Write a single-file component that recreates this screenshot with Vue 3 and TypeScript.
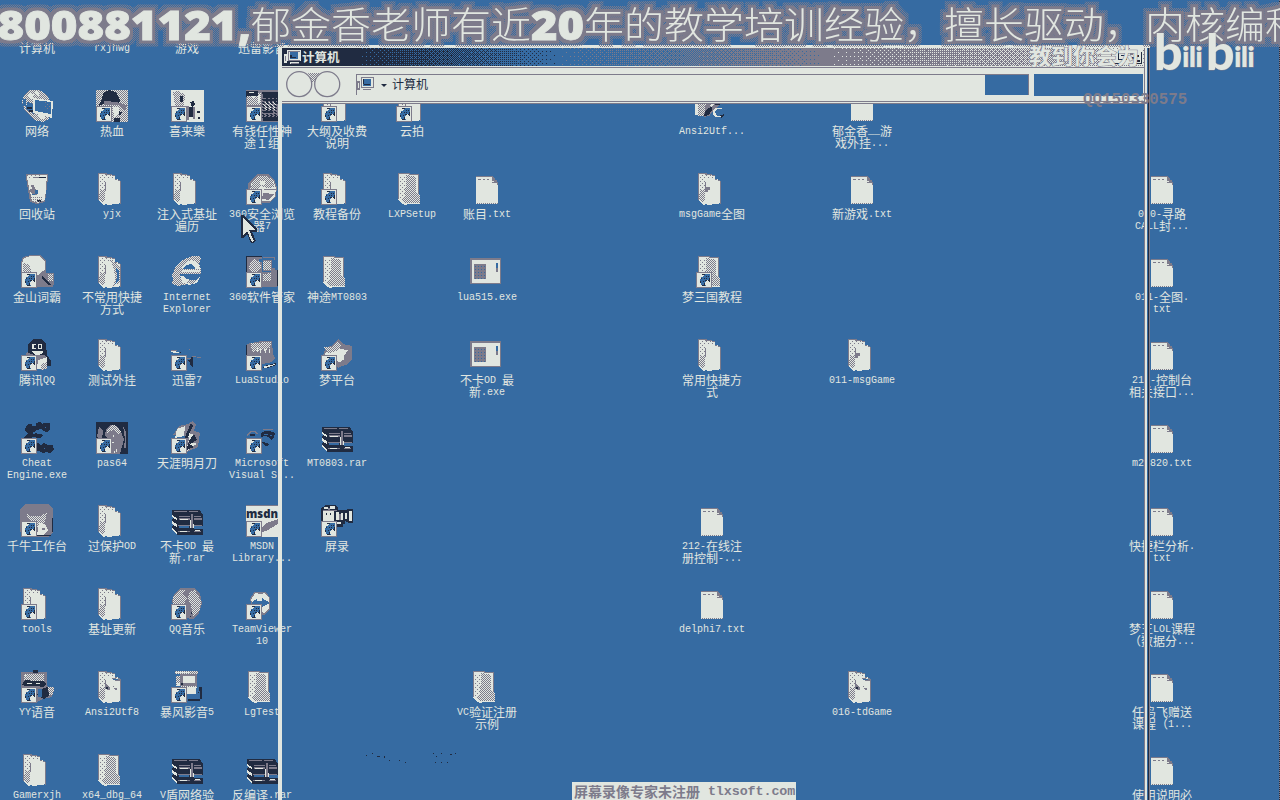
<script setup lang="ts">
interface Item {
  col: number
  row: number
  icon: string
  lines: string[]
  shortcut?: boolean
}

const raw: [number, number, string, string, boolean?][] = [
  [0, 0, 'none', '计算机'],
  [1, 0, 'none', 'rxjhwg'],
  [2, 0, 'none', '游戏'],
  [3, 0, 'none', '迅雷影音'],
  [0, 1, 'network', '网络'],
  [1, 1, 'pirate', '热血', true],
  [2, 1, 'joy', '喜来樂', true],
  [3, 1, 'noise', '有钱任性神|途１组', true],
  [4, 1, 'folder', '大纲及收费|说明', true],
  [5, 1, 'folder', '云拍', true],
  [9, 1, 'bird', 'Ansi2Utf...'],
  [11, 1, 'text', '郁金香__游|戏外挂...'],
  [0, 2, 'bin', '回收站'],
  [1, 2, 'folder', 'yjx'],
  [2, 2, 'folder', '注入式基址|遍历'],
  [3, 2, 'browser', '360安全浏览|器7', true],
  [4, 2, 'folder', '教程备份', true],
  [5, 2, 'files', 'LXPSetup'],
  [6, 2, 'text', '账目.txt'],
  [9, 2, 'folderDot', 'msgGame全图'],
  [11, 2, 'text', '新游戏.txt'],
  [15, 2, 'text', '010-寻路|CALL封...'],
  [0, 3, 'dictionary', '金山词霸', true],
  [1, 3, 'folderArc', '不常用快捷|方式'],
  [2, 3, 'explorer', 'Internet|Explorer'],
  [3, 3, 'manager', '360软件管家', true],
  [4, 3, 'files', '神途MT0803'],
  [6, 3, 'program', 'lua515.exe'],
  [9, 3, 'files', '梦三国教程', true],
  [15, 3, 'text', '011-全图.|txt'],
  [0, 4, 'penguin', '腾讯QQ', true],
  [1, 4, 'folder', '测试外挂'],
  [2, 4, 'thunder', '迅雷7', true],
  [3, 4, 'lua', 'LuaStudio', true],
  [4, 4, 'dream', '梦平台', true],
  [6, 4, 'program', '不卡OD 最|新.exe'],
  [9, 4, 'folder', '常用快捷方|式'],
  [11, 4, 'folderDot', '011-msgGame'],
  [15, 4, 'text', '210-控制台|相关接口...'],
  [0, 5, 'cheat', 'Cheat|Engine.exe', true],
  [1, 5, 'portrait', 'pas64', true],
  [2, 5, 'blade', '天涯明月刀', true],
  [3, 5, 'studio', 'Microsoft|Visual S...', true],
  [4, 5, 'archive', 'MT0803.rar'],
  [15, 5, 'text', 'm20820.txt'],
  [0, 6, 'bull', '千牛工作台', true],
  [1, 6, 'folder', '过保护OD'],
  [2, 6, 'archive', '不卡OD 最|新.rar'],
  [3, 6, 'msdn', 'MSDN|Library...', true],
  [4, 6, 'camera', '屏录', true],
  [9, 6, 'text', '212-在线注|册控制-...'],
  [15, 6, 'text', '快捷栏分析.|txt'],
  [0, 7, 'folder', 'tools', true],
  [1, 7, 'folder', '基址更新'],
  [2, 7, 'music', 'QQ音乐', true],
  [3, 7, 'viewer', 'TeamViewer|10', true],
  [9, 7, 'text', 'delphi7.txt'],
  [15, 7, 'text', '梦王LOL课程|（数据分...'],
  [0, 8, 'raccoon', 'YY语音', true],
  [1, 8, 'folderMark', 'Ansi2Utf8'],
  [2, 8, 'storm', '暴风影音5', true],
  [3, 8, 'files', 'LgTest'],
  [6, 8, 'files', 'VC验证注册|示例'],
  [11, 8, 'folderMark', '016-tdGame'],
  [15, 8, 'text', '任鸟飞赠送|课程（1...'],
  [0, 9, 'folder', 'Gamerxjh'],
  [1, 9, 'files', 'x64_dbg_64'],
  [2, 9, 'archive', 'V盾网络验'],
  [3, 9, 'archive', '反编译.rar'],
  [15, 9, 'text', '使用说明必'],
]

const items: Item[] = raw.map(([col, row, icon, label, shortcut]) => ({
  col,
  row,
  icon,
  lines: label.split('|'),
  shortcut,
}))

// Splits a line into half-width and full-width runs, which use different font sizes.
function runs(line: string): { text: string; latin: boolean }[] {
  return (line.match(/[\x20-\x7e]+|[^\x20-\x7e]+/g) ?? []).map((text) => ({
    text,
    latin: text.charCodeAt(0) < 0x7f,
  }))
}

const D = '#202b41'
const B = '#366ba2'
const G = '#7d7b8b'
const L = '#e1e6e0'

// Each icon is a list of [fill, path] layers on a 32x32 grid.
const folderBody = 'M2 0h4l13 2v4l5 1v23l-3 1h-4l-2 1h-3l-2-1-2 1-3-2-3-3z'
const folderShade: [string, string][] = [
  [G, 'M2 0h6l11 2v4l6 2v23h-1V8l-5-1V3L6 1H3v27l-1-1z'],
  ['url(#sparse)', 'M4 2h14v3H4zM4 4h6v14H4z'],
  ['url(#half)', 'M4 17l5-1v10l-3 4-3-4z'],
  [G, 'M9 9h1v9h-1z'],
]
const filesBody = 'M2 0h3l17 1v20l2 2v8H12l-3 1-3-1-4-4z'
const art: Record<string, [string, string][]> = {
  none: [],
  folder: [[L, folderBody], ...folderShade],
  folderDot: [[L, folderBody], ...folderShade, [G, 'M9 14h5v3h-2v2H9z']],
  folderMark: [
    [L, folderBody],
    ...folderShade,
    [G, 'M9 12l5 5v2h-3zM15 7l9 1v2h-4zM18 17h3v2h-2zM17 15h1v1h-1z'],
    [D, 'M10 16h2v2h-2z'],
    [B, 'M17 8h5v1h-5z'],
  ],
  folderArc: [
    [L, folderBody],
    ...folderShade,
    ['url(#half)', 'M14 4l6 3 4 5v14l-7 5 2-8-1-10z'],
    [B, 'M20 11l3 4v9l-4 5 2-8z'],
  ],
  files: [
    [L, filesBody],
    [G, 'M2 0h3l17 1v1L3 1v26l-1-1zM22 1h1v20h-1z'],
    ['url(#sparse)', 'M4 3h6v22H4z'],
    ['url(#half)', 'M10 2l10 2v24H9z'],
    ['url(#half)', 'M20 20l4 3v7H9l-4-4z'],
  ],
  text: [
    [L, 'M5 4h17l5 6v21H5z'],
    [G, 'M5 3h17v1H5zM7 6h3v1H7zM12 6h2v1h-2zM16 6h2v1h-2zM21 4h2v1h1v2h2v2h1v3h-1v-2h-5V9h2V8h-2z'],
    ['url(#gdots)', 'M5 30h22v1H5zM27 12h1v18h-1z'],
  ],
  program: [
    [G, 'M-1 2h31v26H-1z'],
    [L, 'M1 4h28v23H1z'],
    ['url(#gdots)', 'M2 3h27v1H2z'],
    ['url(#halfblue)', 'M3 8h12v15H3z'],
    [B, 'M25 7h2v5h-2z'],
    [G, 'M25 12h2v4h-2z'],
  ],
  network: [
    ['url(#half)', 'M8 0h10l7 4 5 8-2 17-6 3-9-2-9-9-3-9 2-7z'],
    [L, 'M8 3l6 1-3 5-4-2zM15 1l4 2-2 4-3-3zM16 25h8v4h-5z'],
    [B, 'M6 12l6 2 1 10-8-5zM2 9h3v7H2z'],
    [D, 'M6 17h5v2H6zM8 20h4v2H8z'],
    [L, 'M12 8l20 3-1 17-19-5z'],
    [B, 'M14 10l16 2v12l-16-3z'],
    ['url(#sparse)', 'M23 12l7 1-1 7-5-2z'],
  ],
  pirate: [
    [L, 'M0 0h32v32H0z'],
    ['url(#half)', 'M0 0h32v32H0z'],
    [D, 'M7 3l6-3 7 2 4 8-1 4H7l-5 3 4-8zM22 21l4 1-1 3-4-1zM18 28h6v4h-6z'],
    [G, 'M8 11l14 1v3H8zM20 12l11 3-2 5-5-3z'],
    [L, 'M17 17h6v7l-5 4z'],
  ],
  joy: [
    [L, 'M0 0h33v32H0z'],
    ['url(#half)', 'M2 2l6-1 6 4-1 11H4zM8 3h5v9H8z'],
    [D, 'M9 6h3v6H9zM19 12l4-1 1 4-3 2zM17 17h5v10h-5zM26 21h3v2h-3zM27 27h2v2h-2z'],
    [G, 'M15 16h3v14h-3zM22 17h2v12h-2z'],
  ],
  noise: [
    [G, 'M0 0h32v32H0z'],
    [D, 'M0 1h12v8H6v4H1zM16 2h16v12h-5v9h-9V10zM17 26h15v5H17z'],
    ['url(#half)', 'M1 6h12v9H1zM12 3h3v12h-3zM17 12h13v8H17z'],
    [L, 'M3 2h5v1H3zM6 6h3v2H6zM12 5h2v8h-2z'],
    ['url(#darkhalf)', 'M15 8h16v20H15z'],
  ],
  bird: [
    [L, 'M-1 12l8-1v14H-1z'],
    ['url(#half)', 'M2 10h12v16H2z'],
    [G, 'M10 12h8l6 2-4 4-6 7-6 2z'],
    [D, 'M10 20l6-4v4l-3 5-5 1zM19 13l5 1v1h-5zM23 26l5-2v1l-3 3z'],
    [L, 'M19 18h7v1h-5l-2 3 2 4h4v1h-5l-3-2v-5zM14 15l4-2v1l-3 3z'],
  ],
  bin: [
    [G, 'M5 1h22v4l-3 24-8 2-7-2L5 5z'],
    [L, 'M6 2h20l-2 25-7 3-6-2L6 5z'],
    ['url(#sparse)', 'M6 2h14v3H6z'],
    [D, 'M18 4h7v1h-7zM16 27h4v2h-4z'],
    [G, 'M10 12h3l1 4 2 1v5h-4l-3-4v-2h2zM12 4h6v1h-6z'],
    [B, 'M14 17h3v4h-3zM11 21h3v1h-3z'],
    ['url(#gdots)', 'M10 24h11v5H10z'],
  ],
  browser: [
    [G, 'M11 1h11l6 5 3 8-1 9-6 7H9L2 21V11z'],
    [L, 'M12 3h9l6 4 3 8-1 8-5 5H10l-6-8 1-9z'],
    ['url(#half)', 'M6 9l6-6h9l6 5 2 6-8 1-5-2-5 3-6 1z'],
    [L, 'M14 8h5v4h-5z'],
    [G, 'M18 16h12v1H18zM17 20l11 1-5 6-7-1z'],
  ],
  dictionary: [
    [G, 'M2 1l8-2h9l6 5v13h8v12H0V6z'],
    [L, 'M3 2l7-2h8l6 5v9l-5 3-4 5H1V7z'],
    ['url(#half)', 'M2 7l6 2 3 7H2z'],
    [G, 'M16 19l16-1v13H16z'],
    [D, 'M21 20l10 9h-3l-7-6z'],
    ['url(#half)', 'M27 18h5v7h-5z'],
  ],
  explorer: [
    ['url(#half)', 'M2 22l-1 6 7 2 9-2-5-2-3-5v-3h21v-5l-2-5 2-5-1-3h-8l-9 4-7 6-4 9z'],
    [L, 'M9 11l4-5 8-2 6 3 2 6h-6l-3-4h-5l-3 5zM9 20h5l4 4h7l4-3-3 6-8 2-6-2z'],
    [B, 'M12 13l3-4 5-1 4 3v2zM12 18h15l-1 3-7 3-5-2z'],
    ['url(#half)', 'M6 10l7-6 8-1-8 5-5 8-1 8-4 3zM18 24h8l-5 4-6-1z'],
    [L, 'M11 14h18v2H11z'],
  ],
  manager: [
    [D, 'M0 0h16v32H0zM31 14h1v16h-1z'],
    [G, 'M1 1h15v15H1zM17 1h12v14H17zM16 16h14v15H16z'],
    ['url(#half)', 'M4 6l5-3 5 3 1 6-4 4H6l-3-4z'],
    ['url(#half)', 'M17 5h8v9h-8zM17 18l8-1v8h-8z'],
    [B, 'M13 3h3v3h-3zM16 2h12v2H16zM26 4h3v8h-3z'],
    [G, 'M25 14h6v17h-6z'],
  ],
  penguin: [
    [D, 'M12 0h8l5 5 1 11 4 6v5h-4v-4l-4 5-13-1-4-7 2-6V5z'],
    [G, 'M6 13l7 3h11l2 5-4 4H6l-3-5z'],
    [L, 'M11 5h4v5h-4zM17 5h4v5h-4zM11 12h11v2l-4 2h-4zM17 21l9-3v8l-4 4h-6z'],
    [D, 'M13 6h2v3h-2zM18 6h2v3h-2z'],
    ['url(#half)', 'M20 25l6-2v7l-6 1z'],
  ],
  thunder: [
    [L, 'M0 12h5v1h3v1H2v-1H0z'],
    [D, 'M16 22l4-2 1-4 1 3v10l-3-3v-3zM9 13h1v1H9z'],
    [G, 'M15 19h5v1h-5zM21 17h4v1h-4zM26 18h4v1h-4zM0 11h6v1H0zM18 10h1v1h-1z'],
  ],
  lua: [
    [G, 'M1 5l14-3h11l1 13 2 4-3 4-10 2V16H1z'],
    ['url(#half)', 'M5 4l20-1-1 6-18 4z'],
    [L, 'M11 9h1v4h-1zM14 10h1v4h-1zM18 10h3v1h-1v3h-1zM22 10h2v4h-1v-3z'],
    [D, 'M0 6h1v10H0zM18 27l12-3v2l-8 3h-5z'],
    [L, 'M16 28l13-3v1l-10 3z'],
  ],
  dream: [
    [G, 'M17 0l5 5 9 2v12l-5 6-9 4-7-7-8-6 3-8 5-1z'],
    [L, 'M17 5l2 5 8 1-4 6v6h-5l-6-3-9-5 7-5z'],
    ['url(#half)', 'M3 8h9l5-6 3 5-5 5-8 3z'],
    [G, 'M18 24l7-5 6 1-5 6z'],
  ],
  cheat: [
    [D, 'M8 2h3v2h4V1l4-1 2 2 2-1h6v7l-3 2-4-1-2-2-4 1-4 3 8 1 2 2-3 2-8-1v7l6-1 3 2 3-2 4 2h5l1 5-4 3-4-1-3 1-4-2-6-1-7-5-2-6v-2l4-3-3-3 1-5z'],
    [B, 'M12 10h2v2h-2zM24 5h1v1h-1zM23 26h1v1h-1z'],
  ],
  portrait: [
    [D, 'M0 0h32v32H0z'],
    [G, 'M3 5l4 4-1 8-5-2zM10 7l5-4 6 1 4 6 3 7-4 15H14V18L9 14zM27 4l3 6v16h-2l1-9z'],
    ['url(#half)', 'M11 7l5-4 5 1 4 6-2 3-6-5-6 3z'],
    [L, 'M17 13h1v2h-1zM16 20h2v1h-2zM20 27h1v3h-1zM18 29h1v2h-1z'],
  ],
  blade: [
    [G, 'M8 4l9-2 5-3 3 4-2 6 6 2-2 14-11 5V14L2 13z'],
    [L, 'M6 7l8-3-1 10-9 2zM17 11l6 2-5 5zM17 19l9 3-5 3zM16 23h6l-6 7z'],
    [D, 'M20 1l2 3-7 15-2-2zM23 12l3 6-7 4-1-3zM17 21l6 4-7 3z'],
  ],
  studio: [
    [D, 'M4 12h5v2H4zM15 11l4-2h5l5 2-1 4-3 3-2-3-4-1-4 1zM16 20l5 1 3 2-5 1z'],
    [G, 'M0 13l4-4h5l3 3h-1l-3-2H5l-4 4zM17 7h10v1H17z'],
    [B, 'M18 12h4v1h-4zM24 13h2v1h-2z'],
  ],
  archive: [
    [D, 'M1 5h28l3 5v20H7l-6-5v-4l2-2-2-4 2-3-2-3z'],
    [L, 'M1 10l5 3v2l-5-3zM1 16l5 3v3l-5-3zM1 23l5 4v3l-5-5z'],
    [G, 'M3 6h13v1H3zM18 6h9v1h-9zM8 11h11v1H8zM23 11h7v1h-7zM8 13h11v2H8zM23 13h8v2h-8zM7 20h12v1H7zM23 20h8v1h-8zM7 26h12v1H7zM23 26h7v1h-7z'],
    [B, 'M8 21h10v2H8zM23 21h9v3h-9z'],
    [L, 'M9 14h8v1H9zM9 26h7v1H9zM24 25h5v1h-5zM19 15h1v8h-1zM22 19h1v4h-1z'],
    [G, 'M20 9h2v14h-2z'],
  ],
  bull: [
    [G, 'M5-1h22l5 5v23l-5 5H4l-5-5V4z'],
    ['url(#half)', 'M4 8l6 3h10l6-4-1 7-3 7-6 1-5-4z'],
    [L, 'M18 18l6 1 3 6-4 5h-7z'],
    [D, 'M31 13h1v14h-1zM16 30h14v1H16z'],
    [G, 'M21 23h3v2h-3z'],
  ],
  msdn: [
    [L, 'M0 1h32v31H0z'],
    [G, 'M0 0h32v1H0zM20 18l12-4v5l-10 6-6 2v-4z'],
  ],
  camera: [
    [D, 'M2 2l3-2h9l3 2v3h7l3-1h5v14h-4l-4-2v3h-2v3h-6v1H0V3z'],
    [L, 'M3 2h4v2H3zM9 1h5v3H9zM2 6h11v10H2zM15 7h3v8h-3zM20 8h2v7h-2zM24 8h2v6h-2zM28 6h3v10h-3zM15 17h5v2h-5z'],
    [G, 'M7 3h2v2H7zM18 9h2v6h-2zM2 5h14v1H2z'],
    [D, 'M5 8h1v2H5zM9 8h1v2H9z'],
  ],
  music: [
    [G, 'M10 0h13l6 5 2 10-3 10-6 6-8-1V16L2 18l-1-6 3-7z'],
    ['url(#half)', 'M9 2h6l-3 3 4 5-3 6H2l1-8zM19 4l5-2 6 10-1 10-7 6-2-11-3-7z'],
    ['url(#half)', 'M2 8l5-5 6 4v8H2z'],
    [D, 'M20 24h1v2h-1zM19 28h1v1h-1z'],
  ],
  viewer: [
    [G, 'M8 4h12l4 6v11l-6 6h-5l-7-10-2-6z'],
    [L, 'M9 5h10l4 5v10l-5 6-9-9-4-5z'],
    [B, 'M6 14l5-3v2h5v-3l8 5-8 4v-3H6z'],
    [G, 'M12 5h5v1h-5z'],
  ],
  raccoon: [
    [G, 'M0 1h26v14l5 2 2 3-2 6-9 2-6 3V16H0z'],
    ['url(#half)', 'M3 3h20v7H3z'],
    [D, 'M12-1h5v3h-5zM4 9l9 1h9l3 3-2 3-8-1H5l-4-1zM22 17l5-1 1 9-5 3-7-4z'],
    [L, 'M6 12h5v1H6zM15 12h4v1h-4zM4 4h1v1H4z'],
    ['url(#half)', 'M27 16h6l-1 8h-4z'],
    [B, 'M17 18h4v8h-4z'],
  ],
  storm: [
    ['url(#half)', 'M4 0h23v3H4zM5 5h4v10H5zM10 14h16v3H10z'],
    [G, 'M9 3h17v12H9z'],
    [L, 'M5 1h14v1H5zM12 5h12v7H12zM6 12h3v3H6zM16 16h9v7h-9z'],
    [D, 'M28 16h3v12h-2v2H17v-3h10zM10 12h2v2h-2z'],
    [B, 'M17 23h10l2-4v9H17z'],
  ],
}

// Ordered dithering of the title bar gradient, one path per colour.
const bayer = [
  [0, 32, 8, 40, 2, 34, 10, 42],
  [48, 16, 56, 24, 50, 18, 58, 26],
  [12, 44, 4, 36, 14, 46, 6, 38],
  [60, 28, 52, 20, 62, 30, 54, 22],
  [3, 35, 11, 43, 1, 33, 9, 41],
  [51, 19, 59, 27, 49, 17, 57, 25],
  [15, 47, 7, 39, 13, 45, 5, 37],
  [63, 31, 55, 23, 61, 29, 53, 21],
]
const stops = [0, 75, 275, 545, 1010]
const tones = [D, D, B, G, L]
const titleLayers = tones.map((fill) => ({ fill, d: '' }))
for (let y = 0; y < 18; y++) {
  let start = 0
  let last = -1
  for (let x = 0; x <= 863; x++) {
    let s = 0
    while (s < 3 && x >= stops[s + 1]) s++
    const t = (x - stops[s]) / (stops[s + 1] - stops[s])
    const tone = x === 863 ? -2 : t > (bayer[y % 8][x % 8] + 0.5) / 64 ? s + 1 : s
    if (tone !== last) {
      if (last >= 0) titleLayers[last].d += `M${start} ${y}h${x - start}v1H${start}z`
      start = x
      last = tone
    }
  }
}

const bannerText: [string, number, number, boolean][] = [
  ['800881121', -2.5, 240, true],
  [',', 238, 13, true],
  ['郁金香老师有近', 251, 280, false],
  ['20', 531, 53, true],
  ['年的教学培训经验，擅长驱动，', 584, 560, false],
  ['内核编程', 1145, 160, false],
]
</script>

<template>
  <main class="screen">
    <svg class="defs" width="0" height="0" aria-hidden="true">
      <defs>
        <pattern id="half" width="2" height="2" patternUnits="userSpaceOnUse">
          <path fill="#e1e6e0" d="M0 0h2v2H0z" /><path fill="#7d7b8b" d="M0 0h1v1H0zM1 1h1v1H1z" />
        </pattern>
        <pattern id="sparse" width="4" height="4" patternUnits="userSpaceOnUse">
          <path fill="#7d7b8b" d="M0 0h1v1H0zM2 2h1v1H2z" />
        </pattern>
        <pattern id="gdots" width="2" height="2" patternUnits="userSpaceOnUse">
          <path fill="#7d7b8b" d="M0 0h1v1H0z" />
        </pattern>
        <pattern id="halfblue" width="3" height="3" patternUnits="userSpaceOnUse">
          <path fill="#7d7b8b" d="M0 0h3v3H0z" /><path fill="#366ba2" d="M1 1h1v1H1z" />
        </pattern>
        <pattern id="darkhalf" width="4" height="3" patternUnits="userSpaceOnUse">
          <path fill="#202b41" d="M0 0h2v1H0zM1 1h2v1H1z" /><path fill="#7d7b8b" d="M2 2h2v1H2z" />
        </pattern>
        <filter id="glow" x="0" y="0" width="1280" height="76" filterUnits="userSpaceOnUse" color-interpolation-filters="sRGB">
          <feMorphology in="SourceAlpha" operator="dilate" radius="3" result="near" />
          <feMorphology in="SourceAlpha" operator="dilate" radius="6" result="far" />
          <feFlood x="0" y="0" width="1" height="1" flood-color="#7d7b8b" result="d1" />
          <feFlood x="1" y="1" width="1" height="1" flood-color="#7d7b8b" result="d2" />
          <feMerge x="0" y="0" width="2" height="2" result="cell">
            <feMergeNode in="d1" /><feMergeNode in="d2" />
          </feMerge>
          <feTile in="cell" result="checker" />
          <feFlood flood-color="#7d7b8b" result="solid" />
          <feComposite x="0" y="0" width="1280" height="44" in="solid" in2="near" operator="in" result="inner" />
          <feComposite x="0" y="0" width="1280" height="47" in="checker" in2="far" operator="in" result="outer" />
          <feMerge>
            <feMergeNode in="outer" /><feMergeNode in="inner" /><feMergeNode in="SourceGraphic" />
          </feMerge>
        </filter>
      </defs>
    </svg>

    <section class="desktop">
      <div
        v-for="item in items"
        :key="item.col + '-' + item.row"
        class="item"
        :style="{ gridColumn: item.col + 1, gridRow: item.row + 1 }"
      >
        <svg class="icon" viewBox="0 0 32 32" width="32" height="32" shape-rendering="crispEdges">
          <path v-for="(layer, i) in art[item.icon]" :key="i" :fill="layer[0]" :d="layer[1]" />
          <text v-if="item.icon === 'msdn'" class="msdn" x="0" y="13" textLength="32" lengthAdjust="spacingAndGlyphs">msdn</text>
          <g v-if="item.shortcut">
            <path fill="#7d7b8b" d="M0 16h16v16H0z" />
            <path fill="#e1e6e0" d="M1 17h14v14H1z" />
            <path fill="#366ba2" d="M6 18h8v8h-1v-1h-1v-1h-1v1h-1v1H9v3h1v1H6v-1H5v-2H4v-4h1v-2h2v-1h1v-1H6z" />
            <path fill="#202b41" d="M6 18h3v1H6zM13 22h1v4h-1zM12 24h1v1h-1zM10 20h1v1h-1zM12 20h1v1h-1zM8 22h1v1H8zM10 22h1v1h-1zM5 22h1v1H5zM9 24h2v1H9zM4 25h1v2H4zM7 25h1v1H7zM8 27h1v2H8zM6 29h3v1H6z" />
          </g>
        </svg>
        <div class="label">
          <div v-for="(line, i) in item.lines" :key="i" class="line">
            <span v-for="(run, j) in runs(line)" :key="j" :class="run.latin ? 'latin' : 'han'">{{ run.text }}</span>
          </div>
        </div>
      </div>
    </section>

    <section class="window">
      <header class="titlebar">
        <svg class="dither" width="863" height="18" shape-rendering="crispEdges">
          <path v-for="(layer, i) in titleLayers" :key="i" :fill="layer.fill" :d="layer.d" />
        </svg>
        <svg class="computer" width="17" height="15" viewBox="0 0 17 15" shape-rendering="crispEdges">
          <path fill="#e1e6e0" d="M0 4h3v9H0zM3 0h14v11H3zM6 12h9v2H6z" />
          <path fill="#7d7b8b" d="M1 6h1v5H1zM4 10h12v1H4zM7 13h8v1H7zM4 1h12v1H4zM4 1h1v9H4z" />
          <path fill="#366ba2" d="M6 2h8v7H6z" /><path fill="#202b41" d="M6 5h2v3H6zM8 7h4v1H8z" />
        </svg>
        <span class="title">计算机</span>
        <svg class="controls" width="42" height="16" viewBox="0 0 42 16" shape-rendering="crispEdges">
          <path fill="#e1e6e0" d="M0 0h42v16H0z" />
          <path fill="#202b41" d="M0 13h7v1H0zM17 2h9v2h-9zM17 4h1v6h-1zM25 4h1v6h-1zM17 10h9v1h-9zM20 6h4v1h-4zM10 14h11v1H10zM40 3h1v12h-6v-1h5zM31 8h3v2h-3zM36 6h2v2h-2zM36 11h3v2h-3z" />
          <path fill="#7d7b8b" d="M3 3h4v2H3zM29 4h3v2h-3zM10 2h1v11h-1zM33 11h2v1h-2z" />
        </svg>
      </header>
      <div class="toolbar">
        <svg class="nav" width="56" height="28" viewBox="0 0 56 28">
          <path d="M22 2h13l-3 4-2 5h-4l-2-5z" fill="url(#half)" />
          <circle cx="13.2" cy="13.2" r="12.5" /><circle cx="41.2" cy="13.2" r="12.5" />
        </svg>
        <div class="address">
          <svg class="computer small" width="17" height="14" viewBox="0 0 17 14" shape-rendering="crispEdges">
            <path fill="#7d7b8b" d="M0 4h3v9H0zM4 0h13v11H4zM6 12h8v1H6z" />
            <path fill="#e1e6e0" d="M1 6h1v5H1zM5 1h11v9H5z" />
            <path fill="#366ba2" d="M6 2h8v7H6z" /><path fill="#202b41" d="M6 2h1v5H6zM7 7h6v1H7z" />
          </svg>
          <i class="caret"></i>
          <span class="path">计算机</span>
          <i class="refresh"></i>
        </div>
        <div class="search"></div>
      </div>
    </section>
    <i class="edge"></i>
    <svg class="flecks" width="90" height="12" shape-rendering="crispEdges">
      <path fill="#202b41" d="M0 2h1v1H0zM6 0h1v1H6zM11 3h3v1h-3zM18 3h1v2h-1zM23 7h1v1h-1zM33 7h1v1h-1zM39 9h1v1h-1zM67 0h1v1h-1zM70 3h1v1h-1zM75 0h1v1h-1zM84 1h2v1h-2zM89 0h1v1h-1zM69 9h1v1h-1zM75 9h1v1h-1zM81 9h1v1h-1z" />
    </svg>

    <svg class="banner" width="1280" height="76">
      <g filter="url(#glow)">
        <text v-for="(t, i) in bannerText" :key="i" :class="{ heavy: t[3] }" :x="t[1]" :y="t[3] ? 40 : 39" :textLength="t[2]" lengthAdjust="spacingAndGlyphs">{{ t[0] }}</text>
      </g>
      <text class="slogan" x="1029" y="64" textLength="110">教到你会为</text>
      <text class="bili">
        <tspan class="big" x="1154" y="70">b</tspan><tspan x="1182" y="67">ili</tspan><tspan class="big" x="1206" y="70">b</tspan><tspan x="1234" y="67">ili</tspan>
      </text>
    </svg>
    <div class="contact">QQ150330575</div>
    <footer class="notice"><span class="cn">屏幕录像专家未注册</span><span class="en">&nbsp;tlxsoft.com</span></footer>
    <svg class="cursor" width="18" height="29" viewBox="0 0 18 29" shape-rendering="crispEdges">
      <path fill="#202b41" d="M0 0h2l14 14v3h-5l4 9-3 2h-2L6 19l-3 4H0z" />
      <path fill="#e1e6e0" d="M2 3l12 12H8l5 11-2 1-5-11-4 4z" />
    </svg>
  </main>
</template>

<style>
body {
  margin: 0;
  overflow: hidden;
}
</style>

<style scoped>
.screen {
  position: relative;
  width: 1280px;
  height: 800px;
  overflow: hidden;
  background: #366ba2;
  color: #e1e6e0;
  font-family: "Liberation Sans", "Noto Sans CJK SC", sans-serif;
}
.defs {
  position: absolute;
}
.desktop {
  display: grid;
  grid-template-columns: repeat(17, 75px);
  grid-template-rows: repeat(10, 83px);
  padding-top: 7px;
  width: 1280px;
  box-sizing: border-box;
}
.item {
  width: 74px;
  height: 83px;
}
.icon {
  display: block;
  margin-left: 21px;
  overflow: visible;
}
.msdn {
  font: 800 13px "Open Sans", sans-serif;
  fill: #202b41;
}
.label {
  margin-top: 3px;
}
.line {
  height: 12px;
  line-height: 12px;
  display: flex;
  justify-content: center;
  white-space: pre;
}
.latin {
  font: 10px/12px "Liberation Mono", monospace;
  padding-top: 1px;
}
.han {
  font: 12px/12px "Noto Sans CJK SC", sans-serif;
}
.window {
  position: absolute;
  left: 278px;
  top: 45px;
  width: 872px;
  height: 755px;
  box-sizing: border-box;
  border-left: 4px solid #e1e6e0;
  border-top: 3px solid #e1e6e0;
}
.window::after {
  content: "";
  position: absolute;
  right: 0;
  top: 0;
  width: 6px;
  height: 752px;
  background: linear-gradient(90deg, #7d7b8b 1px, #e1e6e0 1px 3px, #366ba2 3px 4px, #202b41 4px 5px, #7d7b8b 5px);
}
.titlebar {
  position: relative;
  display: flex;
  align-items: center;
  width: 863px;
  height: 18px;
}
.dither {
  position: absolute;
  left: 0;
  top: 0;
}
.computer {
  position: relative;
  margin-left: 2px;
}
.title {
  position: relative;
  margin-left: 1px;
  font: 700 12.5px/18px "Noto Sans CJK SC", sans-serif;
}
.controls {
  position: relative;
  margin-left: auto;
  margin-right: 2px;
}
.toolbar {
  display: flex;
  width: 862px;
  height: 38px;
  box-sizing: border-box;
  border-top: 1px solid #e1e6e0;
  border-bottom: 1px solid #7d7b8b;
  background: linear-gradient(#7d7b8b 1px, #e1e6e0 1px 34px, #7d7b8b 34px 35px, #e1e6e0 35px);
}
.nav {
  margin: 4px 0 0 4px;
  fill: #e1e6e0;
  stroke: #7d7b8b;
  stroke-width: 1.3;
}
.nav path {
  stroke: none;
}
.address {
  display: flex;
  align-items: center;
  margin: 7px 0 0 14px;
  width: 673px;
  height: 21px;
  box-sizing: border-box;
  border-top: 1px solid #7d7b8b;
  border-left: 1px solid #7d7b8b;
}
.computer.small {
  margin-left: 0;
  margin-top: -2px;
}
.caret {
  margin: 0 5px 0 7px;
  border: 3px solid transparent;
  border-top-color: #202b41;
  border-bottom: 0;
}
.path {
  color: #202b41;
  font: 12px/18px "Noto Sans CJK SC", sans-serif;
  margin-top: -3px;
}
.refresh {
  align-self: stretch;
  width: 43px;
  margin-left: auto;
  background: #366ba2;
  border-right: 1px solid #7d7b8b;
}
.search {
  width: 109px;
  height: 22px;
  margin: 7px 0 0 5px;
  background: #366ba2;
}
.edge {
  position: absolute;
  right: 0;
  top: 0;
  width: 1px;
  height: 800px;
  background: repeating-linear-gradient(#7d7b8b 0 1px, #202b41 1px 2px);
}
.flecks {
  position: absolute;
  left: 366px;
  top: 753px;
}
.banner {
  position: absolute;
  left: 0;
  top: 0;
}
.banner text {
  font-family: "Noto Sans CJK SC", sans-serif;
  font-size: 37px;
  font-weight: 300;
  fill: #e1e6e0;
}
.banner text.heavy {
  font-family: "Open Sans", "Liberation Sans", sans-serif;
  font-size: 40px;
  font-weight: 800;
  stroke: #e1e6e0;
  stroke-width: 0.8px;
}
.banner text.slogan {
  font-size: 22px;
  font-weight: 700;
  stroke: #7d7b8b;
  stroke-width: 1px;
  paint-order: stroke;
}
.banner text.bili {
  font-family: Lato, "Liberation Sans", sans-serif;
  font-size: 29px;
  font-weight: 900;
  letter-spacing: -0.8px;
  stroke: #7d7b8b;
  stroke-width: 1px;
  paint-order: stroke;
}
.bili .big {
  font-size: 50px;
}
.contact {
  position: absolute;
  left: 1083px;
  top: 93px;
  color: #7d7b8b;
  font: 700 15.8px/15px "Liberation Mono", monospace;
}
.notice {
  position: absolute;
  left: 572px;
  top: 782px;
  width: 224px;
  height: 18px;
  display: flex;
  align-items: center;
  box-sizing: border-box;
  padding-left: 2px;
  background: #e1e6e0;
  color: #7d7b8b;
  white-space: nowrap;
}
.cn {
  font: 700 14px/18px "Noto Sans CJK SC", sans-serif;
}
.en {
  font: 700 13.4px/18px "Liberation Mono", monospace;
  letter-spacing: -0.1px;
  padding-top: 2px;
}
.cursor {
  position: absolute;
  left: 241px;
  top: 215px;
}
</style>
